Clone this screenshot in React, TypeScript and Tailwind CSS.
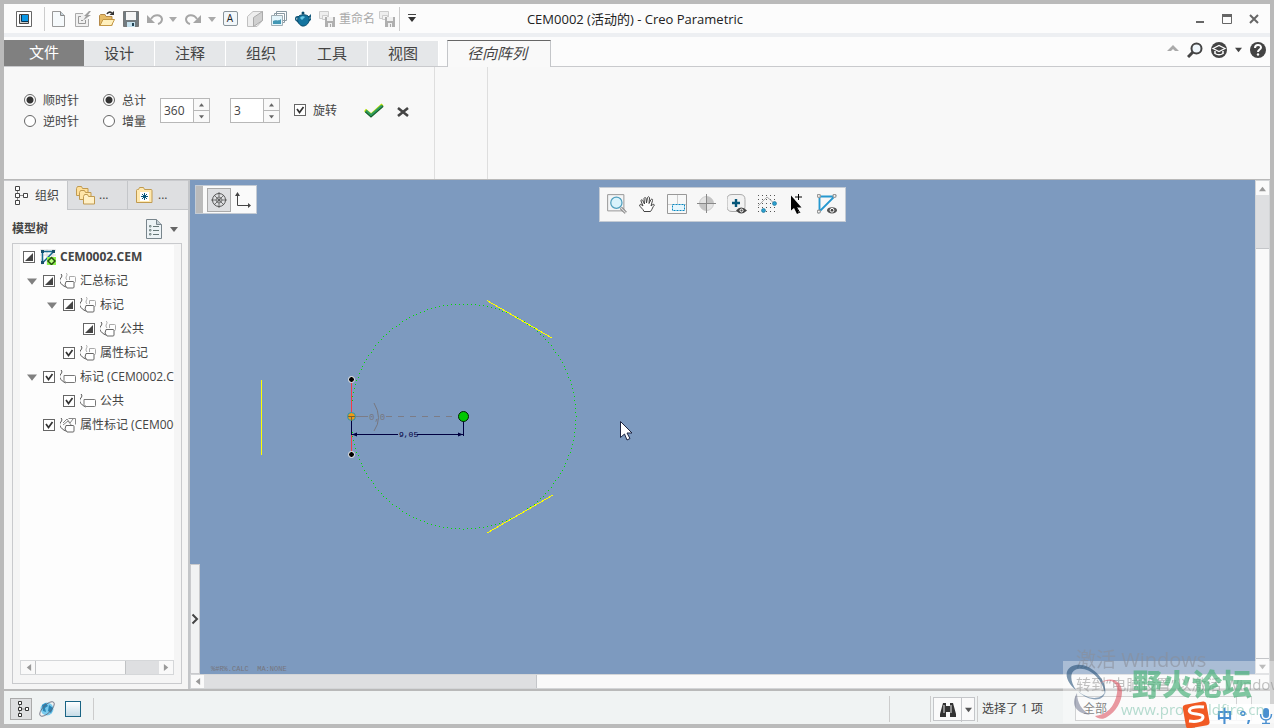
import type { ReactNode } from "react";

type CheckState = "checked" | "partial";
type TreeIconKind = "model" | "group" | "mark" | "prop";

interface TreeItem {
  label: string;
  state: CheckState;
  icon: TreeIconKind;
  indent: string;
  expanded?: boolean;
}

const tabs = ["设计", "注释", "组织", "工具", "视图"];

const treeItems: TreeItem[] = [
  { label: "CEM0002.CEM", state: "partial", icon: "model", indent: "pl-0" },
  { label: "汇总标记", state: "partial", icon: "group", indent: "pl-1", expanded: true },
  { label: "标记", state: "partial", icon: "group", indent: "pl-6", expanded: true },
  { label: "公共", state: "partial", icon: "group", indent: "pl-[60px]" },
  { label: "属性标记", state: "checked", icon: "group", indent: "pl-10" },
  { label: "标记 (CEM0002.CEM)", state: "checked", icon: "mark", indent: "pl-1", expanded: true },
  { label: "公共", state: "checked", icon: "mark", indent: "pl-10" },
  { label: "属性标记 (CEM0002.CEM)", state: "checked", icon: "prop", indent: "pl-5" },
];

// pattern circle, one dot about every 4px
const circleDots = Array.from({ length: 176 }, (_, i) => {
  const angle = (i / 176) * Math.PI * 2;
  return {
    x: Math.round(463 + 112.5 * Math.cos(angle)),
    y: Math.round(416 + 112.5 * Math.sin(angle)),
  };
});

function Icon({ children, className = "h-4 w-4" }: { children: ReactNode; className?: string }) {
  return (
    <svg viewBox="0 0 16 16" fill="none" className={`shrink-0 ${className}`} aria-hidden="true">
      {children}
    </svg>
  );
}

function Triangle({ dir, className }: { dir: "up" | "down" | "left" | "right"; className: string }) {
  const points = {
    up: "0,7 4,2 8,7",
    down: "0,2 8,2 4,7",
    left: "7,0 2,4 7,8",
    right: "1,0 6,4 1,8",
  };
  return (
    <svg viewBox="0 0 8 8" className={`shrink-0 fill-current ${className}`} aria-hidden="true">
      <polygon points={points[dir]} />
    </svg>
  );
}

function HierarchyIcon() {
  return (
    <svg viewBox="0 0 16 20" fill="#fff" stroke="#444" className="h-5 w-4 shrink-0" aria-hidden="true">
      <path d="M4.500 4v12M5 9.500h6" stroke="#888" />
      <path d="M2.500.500h4v4h-4zM2.500 7.500h4v4h-4zM2.500 14.500h4v4h-4zM10.500 7.500h4v4h-4z" />
    </svg>
  );
}

function SaveCopyIcon() {
  return (
    <Icon>
      <path d="M.5.500h9v7h-9z" fill="#eee" stroke="#ccc" />
      <path d="M3.500 4.500h5v4h-5z" fill="#f4f4f4" stroke="#ccc" />
      <path d="M6 6h10v10H6z" fill="#b0b0b0" />
      <path d="M8 6h6v4H8zM9 12h4v4H9z" fill="#f0f0f0" />
      <path d="M11 13h1v3h-1z" fill="#aaa" />
    </Icon>
  );
}

function ToolButton({ label, children, className = "w-6" }: { label: string; children: ReactNode; className?: string }) {
  return (
    <button type="button" aria-label={label} className={`flex h-6 shrink-0 items-center justify-center ${className}`}>
      {children}
    </button>
  );
}

function TitleBar() {
  return (
    <header className="flex h-[29px] shrink-0 items-center bg-[#fcfcfc] pr-1">
      <div className="flex flex-1 items-center">
        <ToolButton label="窗口" className="w-10">
          <Icon>
            <path d="M.5.500h15v15H.5z" fill="#fff" stroke="#666" />
            <path d="M3.500 3.500h9v9h-9z" fill="#ccc" stroke="#444" />
            <path d="M6 4h6v6H6z" fill="#0b97e5" />
            <path d="M5.500 4v6.500H12" stroke="#035" />
          </Icon>
        </ToolButton>
        <div className="mr-[2px] h-6 w-px bg-[#ccc]" />
        <ToolButton label="新建">
          <Icon>
            <path d="M1.500.500h8l4 4v11h-12z" fill="#f6fafc" stroke="#999" />
            <path d="M9.500.500v4h4" fill="#c5d3da" stroke="#888" />
          </Icon>
        </ToolButton>
        <ToolButton label="编辑">
          <Icon>
            <path d="M8 2.500H.5v13h13V8" fill="#f0f0f0" stroke="#aaa" />
            <path d="M6 5.500H3.500v7h7V9M6 9.500h2" stroke="#999" />
            <path d="M14 0l-5 5h2L8 9.500l8-5.500h-3l3-4z" fill="#a0a0a0" />
          </Icon>
        </ToolButton>
        <ToolButton label="打开">
          <Icon>
            <path d="M.5 14.500V4.500l1-1H6l1 2h6v9z" fill="#e6bc68" stroke="#b58a4a" />
            <path d="M1 14.500l3-6h11.500l-3 6z" fill="#fff0bd" stroke="#c49846" />
            <path d="M8 3c1-2 3-2.500 5-1" stroke="#333" strokeWidth="1.500" />
            <path d="M10.500 4H15V0z" fill="#333" />
          </Icon>
        </ToolButton>
        <ToolButton label="保存">
          <Icon>
            <path d="M.5.500h15v15H.5z" fill="#727b80" stroke="#777" />
            <path d="M3 1h10v8H3z" fill="#f6f6f6" />
            <path d="M4 11h8v5H4z" fill="#c6e2ef" />
            <path d="M9 12h2v3H9z" fill="#245" />
          </Icon>
        </ToolButton>
        <ToolButton label="撤消">
          <Icon>
            <path d="M4 8C7 3 14 3 15 8c0 3-1 4-4 5" stroke="#a6a6a6" strokeWidth="2" />
            <path d="M0 4v8h8z" fill="#a6a6a6" />
          </Icon>
        </ToolButton>
        <ToolButton label="撤消列表" className="w-3">
          <Triangle dir="down" className="h-2 w-2 text-[#aaa]" />
        </ToolButton>
        <ToolButton label="重做" className="w-7">
          <Icon>
            <path d="M12 8C9 3 2 3 1 8c0 3 1 4 4 5" stroke="#a6a6a6" strokeWidth="2" />
            <path d="M16 4v8H8z" fill="#a6a6a6" />
          </Icon>
        </ToolButton>
        <ToolButton label="重做列表" className="w-[10px]">
          <Triangle dir="down" className="h-2 w-2 text-[#aaa]" />
        </ToolButton>
        <ToolButton label="注释" className="w-[26px]">
          <span className="flex h-[15px] w-[15px] items-center justify-center rounded-xs border border-[#89949a] bg-[#f2f7fa] text-[10px] text-[#222]">
            A
          </span>
        </ToolButton>
        <ToolButton label="实体">
          <Icon>
            <path d="M.5 5.500L6 .500h9.500v9L10 15.500H.500z" fill="#eee" stroke="#c0c0c0" />
            <path d="M6.500 6.500L15.500.500v9l-9 6z" fill="#d0d0d0" stroke="#aaa" />
          </Icon>
        </ToolButton>
        <ToolButton label="图像">
          <Icon>
            <path d="M5.500.500h10v9h-10zM3.500 2.500h10v9h-10z" fill="#fff" stroke="#8999a2" />
            <path d="M.5 4.500h11v10H.5z" fill="#e4f5fb" stroke="#a0aeb5" />
            <path d="M2 10c3-2 5 1 8-2v5H2z" fill="#4297b4" />
          </Icon>
        </ToolButton>
        <ToolButton label="渲染">
          <Icon>
            <path d="M4 7c-2-3-4 0-3 2 1 1 2 2 4 3M12 8l4-4v4l-4 3" stroke="#155b7e" strokeWidth="1.500" />
            <path d="M3 6c2-3 9-3 11 0 1 4-1 8-5 9H7c-4-2-5-5-4-9z" fill="#14749f" stroke="#084a6a" />
            <path d="M5 7c1-2 4-2 5-1L7 9z" fill="#69c8e4" />
            <circle cx="8" cy="2" r="1.500" fill="#084a6a" />
          </Icon>
        </ToolButton>
        <button type="button" className="flex h-6 items-center gap-1 pl-1 text-[#aaa]">
          <SaveCopyIcon />
          重命名
        </button>
        <ToolButton label="保存副本">
          <SaveCopyIcon />
        </ToolButton>
        <div className="h-6 w-px bg-[#ccc]" />
        <button type="button" aria-label="自定义" className="flex h-6 w-6 flex-col items-center justify-center">
          <span className="h-px w-2 bg-[#444]" />
          <Triangle dir="down" className="h-2 w-2 text-[#333]" />
        </button>
      </div>
      <h1 className="pt-[2px] text-[13px] text-[#222]">CEM0002 (活动的) - Creo Parametric</h1>
      <div className="flex flex-1 items-center justify-end gap-[3px] text-[#666]">
        <ToolButton label="最小化">
          <Icon>
            <path d="M4 11h8" stroke="currentColor" strokeWidth="2" />
          </Icon>
        </ToolButton>
        <ToolButton label="最大化">
          <Icon>
            <path d="M3.500 3.500h9v9h-9z" stroke="currentColor" />
            <path d="M3 4.500h10" stroke="currentColor" strokeWidth="3" />
          </Icon>
        </ToolButton>
        <ToolButton label="关闭">
          <Icon>
            <path d="M4 4l8 8M12 4l-8 8" stroke="currentColor" strokeWidth="2" />
          </Icon>
        </ToolButton>
      </div>
    </header>
  );
}

function TabBar() {
  return (
    <nav className="flex h-[34px] shrink-0 items-end border-b border-[#c9cacd] border-t-4 border-t-[#edeff2] bg-[#fcfcfc] text-[15px] text-[#444]">
      <button type="button" className="h-[26px] w-20 bg-[#808080] pb-[3px] text-white">
        文件
      </button>
      {tabs.map((tab) => (
        <button key={tab} type="button" className="h-[25px] w-[71px] border-r border-white bg-[#e5e7e9] pb-px">
          {tab}
        </button>
      ))}
      <button
        type="button"
        className="-mb-px ml-2 h-[27px] w-[104px] border-x border-t border-x-[#c4c6c9] border-t-[#666] bg-[#f9f9f9] pb-[3px] pr-1 italic"
      >
        径向阵列
      </button>
      <div className="ml-auto flex h-[30px] items-center gap-2 pr-1 pb-[3px] text-[#444]">
        <button type="button" aria-label="折叠功能区" className="pb-1">
          <svg viewBox="0 0 12 8" className="h-2 w-3 fill-[#aaa]" aria-hidden="true">
            <path d="M0 7l6-6 6 6H8L6 5 4 7z" />
          </svg>
        </button>
        <button type="button" aria-label="搜索">
          <Icon>
            <circle cx="9.500" cy="6.500" r="5" fill="#f0f7fc" stroke="currentColor" strokeWidth="2" />
            <path d="M6 10l-5 5" stroke="currentColor" strokeWidth="3" />
          </Icon>
        </button>
        <button type="button" aria-label="学习">
          <Icon>
            <circle cx="8" cy="8" r="8" fill="currentColor" />
            <path d="M2 6.500l6-3 6 3-6 3z" stroke="#fff" strokeWidth="1.200" />
            <path d="M4 9v2.500c3 2 5 2 8 0V9" stroke="#fff" strokeWidth="1.500" />
          </Icon>
        </button>
        <button type="button" aria-label="学习菜单">
          <Triangle dir="down" className="h-[7px] w-[7px]" />
        </button>
        <button type="button" aria-label="帮助">
          <Icon>
            <circle cx="8" cy="8" r="8" fill="currentColor" />
            <path d="M5 6c0-4 6-4 6-.5C11 7.500 8 7.500 8 10" stroke="#fff" strokeWidth="2" />
            <circle cx="8" cy="12.500" r="1.200" fill="#fff" />
          </Icon>
        </button>
      </div>
    </nav>
  );
}

function RadioOption({ name, label, checked }: { name: string; label: string; checked?: boolean }) {
  return (
    <label className="flex h-[21px] items-center gap-[7px]">
      <input
        type="radio"
        name={name}
        defaultChecked={checked}
        className="h-3 w-3 appearance-none rounded-full border border-[#666] bg-white checked:bg-[radial-gradient(circle,#333_3px,#fff_4px)]"
      />
      <span className="pt-[2px]">{label}</span>
    </label>
  );
}

function CheckBox({ state, label, id }: { state: CheckState; label?: string; id?: string }) {
  return (
    <span className="grid h-3 w-3 shrink-0">
      <input
        type="checkbox"
        id={id}
        aria-label={label}
        defaultChecked
        className="peer col-start-1 row-start-1 h-3 w-3 appearance-none border border-[#666] bg-white"
      />
      <svg
        viewBox="0 0 12 12"
        fill="none"
        className="pointer-events-none invisible col-start-1 row-start-1 h-3 w-3 peer-checked:visible"
        aria-hidden="true"
      >
        {state === "checked" ? (
          <path d="M3 5l2.500 3.500L9.500 3" stroke="#333" strokeWidth="1.700" />
        ) : (
          <path d="M10 2v8H2z" fill="#444" />
        )}
      </svg>
    </span>
  );
}

function Spinner({ value, label }: { value: string; label: string }) {
  return (
    <div className="flex h-[25px] w-[50px] border border-[#b8b8b8] bg-white">
      <input type="text" aria-label={label} defaultValue={value} className="min-w-0 flex-1 pl-[3px]" />
      <div className="flex w-4 flex-col border-l border-[#b8b8b8] bg-[#f9f9f9] text-[#666]">
        <button type="button" aria-label={`${label}增加`} className="flex flex-1 items-center justify-center border-b border-[#b8b8b8]">
          <Triangle dir="up" className="h-[5px] w-[5px]" />
        </button>
        <button type="button" aria-label={`${label}减少`} className="flex flex-1 items-center justify-center">
          <Triangle dir="down" className="h-[5px] w-[5px]" />
        </button>
      </div>
    </div>
  );
}

function Ribbon() {
  return (
    <section className="flex h-[113px] shrink-0 border-b border-[#b9b9b9] bg-[#f8f8f8]">
      <div className="flex w-[431px] items-start border-r border-[#dedede] pl-5 pt-[22px]">
        <div className="w-[79px]">
          <RadioOption name="direction" label="顺时针" checked />
          <RadioOption name="direction" label="逆时针" />
        </div>
        <div className="w-[57px]">
          <RadioOption name="measure" label="总计" checked />
          <RadioOption name="measure" label="增量" />
        </div>
        <div className="flex items-center gap-5 pt-[9px]">
          <Spinner value="360" label="角度" />
          <Spinner value="3" label="数量" />
        </div>
        <div className="flex h-[42px] items-center gap-[7px] pl-[14px]">
          <CheckBox state="checked" id="rotate" />
          <label htmlFor="rotate" className="pt-[2px]">
            旋转
          </label>
        </div>
        <button type="button" aria-label="确定" className="ml-[27px] flex h-[44px] items-center">
          <svg viewBox="0 0 20 16" fill="none" className="h-4 w-5" aria-hidden="true">
            <path d="M1 7l6 5L18.500 1.500" stroke="#b8e000" strokeWidth="3" />
            <path d="M1.500 8.500l5.500 5L19 3" stroke="#155d2a" strokeWidth="2" />
            <path d="M2 7.500l5 4.500L18 2.500" stroke="#2e9b60" strokeWidth="2" />
          </svg>
        </button>
        <button type="button" aria-label="取消" className="ml-3 flex h-[46px] items-center">
          <svg viewBox="0 0 14 12" fill="none" className="h-3 w-[14px]" aria-hidden="true">
            <path d="M2 2l10 8M12 2L2 10" stroke="#444" strokeWidth="2.600" />
          </svg>
        </button>
      </div>
      <div className="w-[53px] border-r border-[#dedede]" />
    </section>
  );
}

function TreeIcon({ kind }: { kind: TreeIconKind }) {
  if (kind === "model") {
    return (
      <Icon>
        <path d="M0 1h16M0 6h16M0 11h16M2 0v16M7 0v16M13 0v16" stroke="#ddd" />
        <path d="M2.500 14V2.500h11L3 13.500" stroke="#176c91" strokeWidth="1.500" />
        <path d="M1 1h3v3H1zM12 1h3v3h-3zM1 12h3v3H1z" fill="#17506c" />
        <path d="M7 8h9v8H7z" fill="#8cf04c" />
        <path d="M11.500 8.500l3.500 3.500-3.500 3.500L8 12z" fill="#b8ff80" stroke="#244d10" strokeWidth="1.500" />
      </Icon>
    );
  }
  return (
    <Icon>
      {kind === "group" && <path d="M6 0c3 2-2 4 1 7M9.500 7V3.500h5q1 0 1 1v4q0 1-1 1" stroke="#aaa" />}
      {kind === "prop" && <path d="M3 6l4-4 3 4 3-4M3 8l5-4 4 5M8.500 1.500h7v6" stroke="#888" />}
      <path d="M1 1c3 3-3 5-1 8 1 2 3 4 6 5" stroke="#555" />
      {kind === "mark" ? (
        <path d="M4 6.500h10.500q1 0 1 1v5q0 1-1 1H6l-2-2z" fill="#fff" stroke="#777" />
      ) : (
        <path d="M6 8.500h7q1 0 1 1v4.500q0 1-1 1H7l-2-3z" fill="#fff" stroke="#666" />
      )}
    </Icon>
  );
}

function ModelTree() {
  return (
    <ul className="flex-1">
      {treeItems.map((item, i) => (
        <li key={i} className={`flex h-6 items-center ${item.indent}`}>
          {item.expanded && (
            <button type="button" aria-label={`折叠${item.label}`} className="flex w-4 shrink-0 justify-center">
              <Triangle dir="down" className="h-[10px] w-[10px] text-[#808080]" />
            </button>
          )}
          <span className="flex w-5 shrink-0 pl-[3px]">
            <CheckBox state={item.state} label={item.label} />
          </span>
          <TreeIcon kind={item.icon} />
          <span className={`whitespace-nowrap pl-1 ${item.icon === "model" ? "font-bold" : ""}`}>{item.label}</span>
        </li>
      ))}
    </ul>
  );
}

function FolderIcon({ star }: { star?: boolean }) {
  return (
    <svg viewBox="0 0 20 20" className="h-5 w-5 shrink-0" stroke="#c09a50" aria-hidden="true">
      {star ? (
        <>
          <path d="M1.500 5.500q0-1 1-1h1l1-2h4l1 2h6.500q1 0 1 1v12h-15.500z" fill="#ffe9b0" />
          <path d="M5 7h9v9H5z" fill="#fff" stroke="none" />
          <path d="M9.500 8v7M6 11.500h7M7 9l5 5M12 9l-5 5" stroke="#07577a" />
        </>
      ) : (
        <>
          <path d="M.5 3.500l1-2h4l1 2h5.500v7H.5z" fill="#ffdf98" />
          <path d="M3.500 7.500l1-2h4l1 2h5.500v7H3.500z" fill="#ffe5a8" />
          <path d="M7.500 11.500l1-2h3l1 2h6v7.500H7.500z" fill="#fff0c7" />
        </>
      )}
    </svg>
  );
}

function Sidebar() {
  return (
    <aside className="flex w-[186px] shrink-0 flex-col border-r-2 border-[#c3c5c8] bg-[#f5f5f5]">
      <div className="flex h-[30px] shrink-0 border-t border-[#c9cacd]">
        <button type="button" className="flex w-16 items-center gap-[6px] border-r border-[#c4c6c9] pl-[9px]">
          <HierarchyIcon />
          组织
        </button>
        <button type="button" className="flex w-[60px] items-center gap-[3px] border-b border-r border-[#c4c6c9] bg-[#dedfe1] pl-2">
          <FolderIcon />
          <span>...</span>
        </button>
        <button type="button" className="flex flex-1 items-center gap-[3px] border-b border-[#c4c6c9] bg-[#dedfe1] pl-[7px]">
          <FolderIcon star />
          <span>...</span>
        </button>
      </div>
      <div className="flex h-[33px] shrink-0 items-center pl-2 pr-[10px] pt-[5px]">
        <h2 className="flex-1 font-semibold">模型树</h2>
        <button type="button" aria-label="树设置" className="flex items-center gap-2">
          <svg viewBox="0 0 16 20" fill="none" className="h-5 w-4" aria-hidden="true">
            <path d="M.5.500h10l5 5v14H.5z" fill="#edf3f6" stroke="#78858c" />
            <path d="M10.500.500v5h5" fill="#c4ced3" stroke="#78858c" />
            <path d="M7 7.500h6M7 11.500h6M7 15.500h6" stroke="#677" />
            <path d="M3.500 6.500h1.500v1.500H3.500zM3.500 10.500h1.500v1.500H3.500zM3.500 14.500h1.500v1.500H3.500z" stroke="#677" strokeWidth=".8" />
          </svg>
          <Triangle dir="down" className="h-2 w-2 text-[#666]" />
        </button>
      </div>
      <div className="mb-[5px] ml-2 mr-[6px] flex min-h-0 flex-1 flex-col border border-[#c9cacd] px-[7px] pb-2 pt-px">
        <div className="flex min-h-0 flex-1 flex-col overflow-hidden bg-[#fdfdfd]">
          <ModelTree />
          <div className="flex h-[15px] shrink-0 border border-[#d5d7d9] bg-[#dedfe1] text-[#999]">
            <button type="button" aria-label="向左" className="flex w-[14px] items-center justify-center bg-[#f9f9f9]">
              <Triangle dir="left" className="h-[7px] w-[7px]" />
            </button>
            <div className="w-[91px] border-x border-[#c0c2c4] bg-[#fafafa]" />
            <button type="button" aria-label="向右" className="ml-auto flex w-[14px] items-center justify-center bg-[#f9f9f9]">
              <Triangle dir="right" className="h-[7px] w-[7px]" />
            </button>
          </div>
        </div>
      </div>
    </aside>
  );
}

function Sketch() {
  return (
    <svg viewBox="190 180 500 400" className="absolute left-0 top-0 h-[400px] w-[500px]" fill="none" role="img" aria-label="径向阵列草图">
      <g shapeRendering="crispEdges">
        {circleDots.map((dot, i) => (
          <rect key={i} x={dot.x} y={dot.y} width="1" height="1" fill="#00dc00" />
        ))}
        <path d="M261.500 380v75M487 300.500l65 37.500M487 533l66-38" stroke="#ffff00" />
        <path d="M351.500 380v75" stroke="#f33b45" />
        <path d="M352 416.500h16M386 416.500h6M398 416.500h6M410 416.500h6M422 416.500h6M434 416.500h6M446 416.500h6" stroke="#7c7c86" />
        <path d="M351.500 417v18M463.500 421v15M352 434.500h46M417 434.500h46" stroke="#000040" />
      </g>
      <path d="M374 403q9 15 0 28" stroke="#77777f" />
      <path d="M352 434.500l5-2v4zM463 434.500l-5-2v4z" fill="#000040" />
      <text x="369" y="420" fontSize="9" fill="#77777f" className="font-['Liberation_Mono']">
        0,0
      </text>
      <text x="399" y="437" fontSize="8" fill="#000040" className="font-['Liberation_Mono']">
        9,05
      </text>
      <circle cx="351.500" cy="416.500" r="4" fill="#ed9b16" stroke="#2296b8" />
      <path d="M348 416.500h7M351.500 417v4" stroke="#756334" />
      <circle cx="351.500" cy="379.500" r="3" fill="#000" stroke="#fff" />
      <circle cx="351.500" cy="454.500" r="3" fill="#000" stroke="#fff" />
      <circle cx="463.500" cy="416.500" r="5" fill="#00c800" stroke="#002000" />
      <path d="M620.500 421.500v16l4-3.500 2.500 6 3-1.500-3-5.500h5z" fill="#fff" stroke="#1c2340" />
    </svg>
  );
}

function GraphicsToolbar() {
  return (
    <div className="absolute inset-x-0 top-[7px] flex justify-center">
      <div className="flex h-[35px] items-center border border-[#c4cbd4] bg-[#f7f7f7] pb-px pl-[2px] pr-[3px]">
        <ToolButton label="重新调整" className="w-[30px]">
          <Icon className="h-5 w-5">
            <path d="M.5.500h13v13H.5z" fill="#f3f5f6" stroke="#999" strokeWidth=".8" />
            <circle cx="7.500" cy="7" r="4.500" fill="#d9f3fc" stroke="#4f9fbe" />
            <path d="M11 11l4 4" stroke="#777" strokeWidth="2.400" />
            <path d="M11 11l4 4" stroke="#ddd" strokeWidth="1" />
          </Icon>
        </ToolButton>
        <ToolButton label="平移" className="w-[30px]">
          <Icon>
            <path
              d="M5 15.500c-1-3-4-4-4.500-6.500 1-1.500 2 0 3.500 1L2 5c0-2 1.500-1.500 2 0l1.500 3L5 2.500c.5-1.500 2-1 2 0L7.500 7l1-5.500c1-1.500 2-.5 2 .5l-.5 5.500 2-4c1-1 2 0 1.500 1L12 10c2-2 3-2 3.500-1-2 2-2 4-4 6.500z"
              fill="#fff"
              stroke="#444"
            />
          </Icon>
        </ToolButton>
        <ToolButton label="区域缩放" className="w-[30px]">
          <svg viewBox="0 0 20 20" fill="none" className="h-5 w-5" aria-hidden="true">
            <path d="M.5.500h19v19H.5z" fill="#f7f8f8" stroke="#999" />
            <path d="M1 10.500h18M10.500 1v9" stroke="#ccc" />
            <path d="M5.500 10.500h12v6h-12z" fill="#e5f6fd" stroke="#0788c3" strokeDasharray="2 1" />
          </svg>
        </ToolButton>
        <ToolButton label="中心" className="w-[30px]">
          <svg viewBox="0 0 20 20" fill="none" className="h-5 w-5" aria-hidden="true">
            <circle cx="9.500" cy="9.500" r="7" fill="#e4e4e4" stroke="#ccc" />
            <path d="M9.500 2.500a7 7 0 0 1 7 7h-7zM9.500 16.500a7 7 0 0 1-7-7h7z" fill="#c4c4c4" />
            <path d="M9.500 0v19M0 9.500h19" stroke="#888" />
          </svg>
        </ToolButton>
        <ToolButton label="显示过滤" className="w-[30px]">
          <svg viewBox="0 0 20 20" fill="none" className="h-5 w-5" aria-hidden="true">
            <path d="M5 .500h8q5 0 5 5v7q0 5-5 5H5q-5 0-5-5v-7q0-5 5-5z" fill="#f2f2f2" stroke="#aaa" />
            <path d="M9 5v8M5 9h8" stroke="#07577a" strokeWidth="2.400" />
            <path d="M9 16.500q5-6 11 0-6 6-11 0z" fill="#444" />
            <circle cx="14.500" cy="16.500" r="1.500" fill="#555" stroke="#fff" />
          </svg>
        </ToolButton>
        <ToolButton label="栅格" className="w-[30px]">
          <svg viewBox="0 0 20 20" fill="none" className="h-5 w-5" aria-hidden="true">
            <path
              d="M1 1.500h18M1 5.500h18M1 9.500h18M1 13.500h18M1 17.500h18"
              stroke="#555"
              strokeDasharray="1 3"
              shapeRendering="crispEdges"
            />
            <path d="M1 12l9-9 8 7" stroke="#aaa" />
            <circle cx="17.500" cy="9.500" r="2" fill="#2d9fce" stroke="#176f96" strokeWidth=".6" />
            <circle cx="6.500" cy="16.500" r="2" fill="#2d9fce" stroke="#176f96" strokeWidth=".6" />
          </svg>
        </ToolButton>
        <ToolButton label="选择" className="w-[30px]">
          <svg viewBox="0 0 20 20" fill="none" className="h-5 w-5" aria-hidden="true">
            <path d="M4 1.500v15l3-2.500 3 6 2-1-2-5.500h4.500z" fill="#000" />
            <path d="M8 3h7M11.500 0v6M10 14l3 5" stroke="#000" />
          </svg>
        </ToolButton>
        <ToolButton label="草绘显示" className="w-[30px]">
          <Icon className="h-5 w-5">
            <path d="M2 14V2h12z" stroke="#2598d0" strokeWidth="1.500" />
            <circle cx="1.500" cy="1.500" r="1.200" fill="#fff" stroke="#999" />
            <circle cx="14" cy="1.500" r="1.200" fill="#fff" stroke="#999" />
            <circle cx="1.500" cy="14" r="1.200" fill="#fff" stroke="#999" />
            <ellipse cx="12" cy="13" rx="4" ry="2.500" fill="#555" />
            <circle cx="12" cy="13" r="1.500" fill="#444" stroke="#fff" strokeWidth=".8" />
          </Icon>
        </ToolButton>
      </div>
    </div>
  );
}

function Canvas() {
  return (
    <main className="flex min-w-0 flex-1 flex-col">
      <div className="flex min-h-0 flex-1">
        <div className="relative min-w-0 flex-1 overflow-hidden bg-[#7d9abf]">
          <Sketch />
          <div className="absolute left-[5px] top-[5px] flex h-[29px] items-center border border-[#c4cbd4] bg-[#fafafa] pr-px">
            <div className="mr-1 h-full w-[7px] bg-[#bbb]" />
            <button type="button" aria-label="径向" className="flex h-6 w-6 items-center justify-center border border-[#aaa] bg-[#dedfe1]">
              <Icon>
                <circle cx="8" cy="8" r="6.500" stroke="#555" />
                <circle cx="8" cy="8" r="3" stroke="#777" strokeWidth=".8" />
                <path d="M8 0v16M0 8h16M3 3l10 10M13 3L3 13" stroke="#555" strokeWidth=".8" />
              </Icon>
            </button>
            <ToolButton label="坐标">
              <Icon>
                <path d="M2.500 2v11.500H14" stroke="#444" />
                <path d="M0 4l2.500-4L5 4zM13 11l3 2.500-3 2.500z" fill="#444" />
              </Icon>
            </ToolButton>
          </div>
          <GraphicsToolbar />
          <button
            type="button"
            aria-label="展开"
            className="absolute bottom-0 left-0 flex h-[110px] w-[10px] items-center justify-center border border-[#c9cacd] bg-[#f1f2f3] pr-px"
          >
            <svg viewBox="0 0 8 12" fill="none" className="h-3 w-2 shrink-0" aria-hidden="true">
              <path d="M1.500 1.500L6 6l-4.500 4.500" stroke="#444" strokeWidth="2" />
            </svg>
          </button>
          <p className="absolute bottom-0 left-[21px] whitespace-pre font-['Liberation_Mono'] text-[7px] leading-[10px] text-[#75757d]">
            %#R%.CALC  MA:NONE
          </p>
        </div>
        <div className="flex w-[15px] shrink-0 flex-col border border-[#d3d5d7] bg-[#dedfe1] text-[#999]">
          <button type="button" aria-label="向上" className="flex h-[14px] items-center justify-center bg-[#fafafa]">
            <Triangle dir="up" className="h-[7px] w-[7px]" />
          </button>
          <div className="mt-[53px] flex-1 border-y border-[#c4c6c9] bg-[#f9f9f9]" />
          <button type="button" aria-label="向下" className="flex h-[14px] items-center justify-center bg-[#fafafa]">
            <Triangle dir="down" className="h-[7px] w-[7px]" />
          </button>
        </div>
      </div>
      <div className="flex h-[15px] shrink-0 border border-[#d3d5d7] bg-[#dedfe1] text-[#999]">
        <button type="button" aria-label="画布向左" className="flex w-[13px] items-center justify-center bg-[#fafafa]">
          <Triangle dir="left" className="h-[7px] w-[7px]" />
        </button>
        <div className="ml-[332px] flex-1 border-l border-[#c4c6c9] bg-[#f9f9f9]" />
      </div>
    </main>
  );
}

function StatusBar() {
  return (
    <footer className="flex h-[35px] shrink-0 items-center border-t-2 border-[#b9b9b9] bg-[#f0f3f3] pl-[6px] pr-[18px] pt-[2px]">
      <button type="button" aria-label="模型树" className="flex h-[22px] w-[22px] items-center justify-center border border-[#aaa] bg-[#dedfe1]">
        <Icon>
          <path d="M6.500 3v10M7 8h7" stroke="#888" />
          <path d="M5.500.500h3v3h-3zM5.500 6.500h3v3h-3zM5.500 12.500h3v3h-3zM12.500 6.500h3v3h-3z" fill="#fff" stroke="#333" />
        </Icon>
      </button>
      <ToolButton label="浏览器" className="ml-[3px] w-6">
        <Icon>
          <circle cx="8" cy="8" r="6.500" fill="#79caed" />
          <path d="M3 4l4-2 2 3-3 2 1 4-3-1zM10 4l4 3-2 5-3-2z" fill="#2a84b4" />
          <ellipse cx="8" cy="8" rx="9.500" ry="4" transform="rotate(-45 8 8)" stroke="#667" strokeWidth=".8" />
        </Icon>
      </ToolButton>
      <ToolButton label="全屏" className="ml-[2px] w-6">
        <span className="h-4 w-4 border border-[#1a6484] bg-linear-to-b from-white to-[#c7dce7]" />
      </ToolButton>
      <div className="ml-2 h-[22px] w-px bg-[#ccc]" />
      <div className="ml-auto h-[26px] w-px bg-[#ccc]" />
      <div className="ml-10 h-[26px] w-px bg-[#ccc]" />
      <div className="ml-[2px] flex h-6 w-[42px] border border-[#c4c6c9] bg-[#fafafa]">
        <ToolButton label="查找" className="w-[27px]">
          <Icon>
            <path d="M3 1h3v3h4V1h3l3 11v3h-6v-5H6v5H0v-3z" fill="#333" />
            <path d="M4 3v8M11 3v8" stroke="#aaa" strokeWidth="1.500" />
          </Icon>
        </ToolButton>
        <ToolButton label="查找选项" className="flex-1 border-l border-[#c4c6c9]">
          <Triangle dir="down" className="h-[7px] w-[7px] text-[#555]" />
        </ToolButton>
      </div>
      <div className="ml-[2px] h-[26px] w-px bg-[#ccc]" />
      <p className="w-[97px] pl-1">选择了 1 项</p>
      <div className="relative h-[25px] w-[177px]">
        <select aria-label="过滤器" className="h-full w-full appearance-none border border-[#b8babc] bg-[#f9f9f9] pl-[7px]">
          <option>全部</option>
        </select>
        <span className="pointer-events-none absolute inset-y-0 right-[15px] w-px bg-[#b8babc]" />
      </div>
    </footer>
  );
}

function Watermarks() {
  return (
    <div className="pointer-events-none fixed bottom-0 right-0 h-[80px] w-[211px] overflow-hidden">
      <div className="absolute inset-x-0 bottom-[5px] top-[13px] bg-white/35" />
      <p className="absolute left-[13px] top-0 whitespace-nowrap text-[20px] leading-6 text-[#8a9099]/60">激活 Windows</p>
      <p className="absolute left-[13px] top-[26px] whitespace-nowrap text-[15px] leading-5 text-[#909090]/55">
        转到“电脑设置”以激活 Windows。
      </p>
      <svg viewBox="0 0 60 60" className="absolute left-0 top-[13px] h-[60px] w-[60px] opacity-60" aria-hidden="true">
        <path d="M42 33C45 19 28 2 13 4 0 6 1 20 13 29 6 19 7 9 15 8c12-2 25 11 27 25z" fill="#245078" />
        <path d="M15 30c9 8 22 10 27 1-1 11-18 9-27-1z" fill="#46698c" />
        <path d="M35 24c10-8 21-4 19 8-2 14-11 22-22 23 3 3 8 4 12 1 9-5 15-16 15-25 0-13-14-17-24-7z" fill="#dc5562" />
        <path d="M14 32c-7 12-1 20 13 22-8-5-13-12-13-22z" fill="#7a8098" />
      </svg>
      <p className="absolute left-[69px] top-[18px] whitespace-nowrap font-['Noto_Sans_CJK_SC',sans-serif] text-[30px] font-black leading-8 text-[#4fb27c]/70">
        野火论坛
      </p>
      <div className="absolute bottom-0 right-0 flex h-6 w-[79px] items-center justify-end gap-[7px] bg-white/85 text-[#4a90d0]">
        <span className="text-[16px] font-bold leading-6">中</span>
        <span className="text-[16px] font-bold leading-6">°,</span>
        <Icon>
          <rect x="5" y="0" width="6" height="10" rx="3" fill="currentColor" />
          <path d="M2.500 6c0 8 11 8 11 0M8 12v3M4 15.500h8" stroke="currentColor" strokeWidth="1.500" />
        </Icon>
      </div>
      <p className="absolute left-[58px] top-[51px] whitespace-nowrap text-[15px] leading-5 text-[#86c5b1]/60">www.proewildfire.cn</p>
      <svg viewBox="0 0 28 28" className="absolute bottom-0 left-[119px] h-7 w-7" fill="none" aria-hidden="true">
        <rect x="2" y="3" width="24" height="24" rx="3" transform="rotate(-10 14 14)" fill="#f15a24" />
        <path d="M22 7C13 6 5 8 8 12c2 3 13 1 13 5s-7 5-14 4" stroke="#fff" strokeWidth="3" />
      </svg>
    </div>
  );
}

export default function App() {
  return (
    <div className="flex h-screen flex-col overflow-hidden border-4 border-[#bababa] bg-[#f8f8f8] font-['Open_Sans','Noto_Sans_CJK_SC',sans-serif] text-xs text-[#444]">
      <TitleBar />
      <TabBar />
      <Ribbon />
      <div className="flex min-h-0 flex-1">
        <Sidebar />
        <Canvas />
      </div>
      <StatusBar />
      <Watermarks />
    </div>
  );
}
